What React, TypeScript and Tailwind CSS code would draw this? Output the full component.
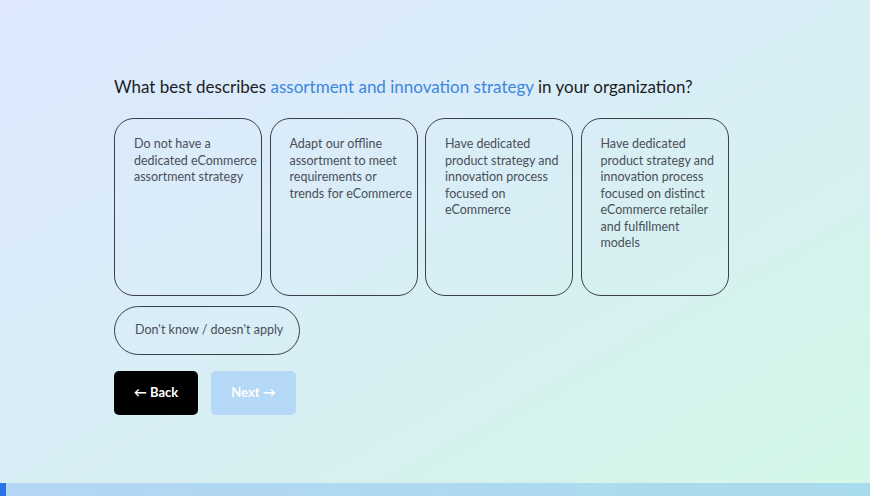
import React from "react";

const options = [
  { text: "Do not have a dedicated eCommerce assortment strategy", pad: "pr-[3px]" },
  { text: "Adapt our offline assortment to meet requirements or trends for eCommerce", pad: "pr-[3px]" },
  { text: "Have dedicated product strategy and innovation process focused on eCommerce", pad: "pr-[3px]" },
  {
    text: "Have dedicated product strategy and innovation process focused on distinct eCommerce retailer and fulfillment models",
    pad: "pr-[8px]",
  },
];

export default function App() {
  return (
    <div className="relative flex h-[496px] w-[870px] flex-col overflow-hidden bg-gradient-to-br from-[#dde8ff] via-[#d8eef5] to-[#d3f7e6] font-['Lato',sans-serif]">
      <div className="flex-1 pl-[114px] pt-[76px]">
        <h1 className="text-[17px] leading-[22px] text-[#1c1c24]">
          What best describes{" "}
          <span className="text-[#3d86de]">assortment and innovation strategy</span> in your
          organization?
        </h1>

        <div className="mt-[20px] flex gap-[7.5px]">
          {options.map((o) => (
            <button
              key={o.text}
              className={`h-[178px] w-[148px] rounded-[20px] border border-[#3b3f46] pl-[19px] pt-[17px] text-left align-top text-[12.5px] leading-[16.5px] text-[#4a4f57] ${o.pad}`}
            >
              <span className="block h-full">{o.text}</span>
            </button>
          ))}
        </div>

        <button className="mt-[10px] h-[49px] w-[186px] rounded-full border border-[#3b3f46] pl-[20px] text-left text-[12.5px] text-[#4a4f57]">
          Don't know / doesn't apply
        </button>

        <div className="mt-[16px] flex gap-[13px]">
          <button className="h-[44px] w-[84px] rounded-[5px] bg-black text-[13px] font-bold text-white">
            ← Back
          </button>
          <button className="h-[44px] w-[85px] rounded-[5px] bg-[#b4d8f5] text-[13px] font-bold text-white">
            Next →
          </button>
        </div>
      </div>

      <div className="flex h-[13px] w-full bg-gradient-to-r from-[#b3d6f5] to-[#a9dcec]">
        <div className="h-full w-[6px] bg-[#2a72e6]" />
      </div>
    </div>
  );
}
